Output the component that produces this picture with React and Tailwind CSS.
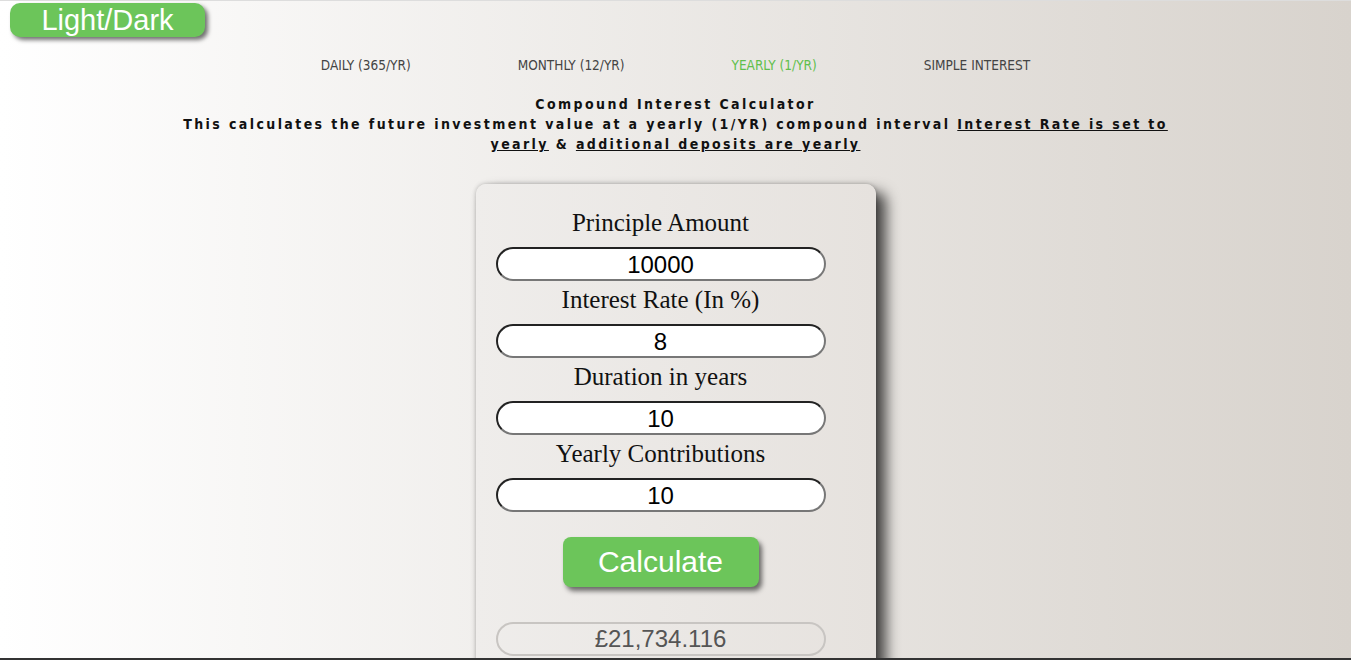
import React, { useState } from 'react';

const navItems = [
  { label: 'DAILY (365/YR)', active: false },
  { label: 'MONTHLY (12/YR)', active: false },
  { label: 'YEARLY (1/YR)', active: true },
  { label: 'SIMPLE INTEREST', active: false },
];

const Field = ({ label, value, onChange }) => (
  <div className="flex flex-col items-center">
    <label className="text-[25px] leading-[28px] text-[#111] mb-[10px]" style={{ fontFamily: '"Liberation Serif", serif' }}>
      {label}
    </label>
    <input
      value={value}
      onChange={(e) => onChange(e.target.value)}
      className="w-[330px] h-[34px] pt-[2px] rounded-full bg-white text-center text-[24px] text-black outline-none border-2 border-t-[#222] border-l-[#222] border-b-[#777] border-r-[#777] mb-[5px]"
      style={{ fontFamily: '"Liberation Sans", Arial, sans-serif' }}
    />
  </div>
);

export default function App() {
  const [principal, setPrincipal] = useState('10000');
  const [rate, setRate] = useState('8');
  const [years, setYears] = useState('10');
  const [contrib, setContrib] = useState('10');
  const [result, setResult] = useState('£21,734.116');

  const calculate = () => {
    const p = parseFloat(principal) || 0;
    const r = (parseFloat(rate) || 0) / 100;
    const n = parseFloat(years) || 0;
    const c = parseFloat(contrib) || 0;
    const growth = Math.pow(1 + r, n);
    const total = p * growth + (r ? c * ((growth - 1) / r) : c * n);
    setResult('£' + total.toLocaleString('en-GB', { maximumFractionDigits: 3 }));
  };

  return (
    <div className="w-full h-[660px] overflow-hidden bg-gradient-to-r from-white to-[#d8d3cd] border-t border-t-[#ddd] border-b-2 border-b-[#333]">
      <div className="px-[10px] pt-[2px]">
        <button
          className="w-[195px] h-[34px] rounded-[10px] bg-[#6cc55a] text-white text-[29px] leading-[34px] shadow-[3px_3px_4px_rgba(0,0,0,0.55)]"
          style={{ fontFamily: '"Liberation Sans", Arial, sans-serif' }}
        >
          Light/Dark
        </button>
      </div>

      <nav className="flex justify-center gap-[107px] mt-[19px] text-[13.5px] leading-[18px]" style={{ fontFamily: '"DejaVu Sans Condensed", "DejaVu Sans", sans-serif', fontStretch: 'condensed' }}>
        {navItems.map((item) => (
          <a key={item.label} className={item.active ? 'text-[#5fbf4c]' : 'text-[#444]'}>
            {item.label}
          </a>
        ))}
      </nav>

      <div className="mt-[20px] text-center text-[14px] leading-[20px] font-bold text-[#111] tracking-[2.4px] px-[170px]" style={{ fontFamily: '"DejaVu Sans Condensed", "DejaVu Sans", sans-serif', fontStretch: 'condensed' }}>
        <p>Compound Interest Calculator</p>
        <p>
          This calculates the future investment value at a yearly (1/YR) compound interval{' '}
          <span className="underline">Interest Rate is set to yearly</span> &amp;{' '}
          <span className="underline">additional deposits are yearly</span>
        </p>
      </div>

      <div className="flex justify-center mt-[30px]">
        <div className="w-[400px] rounded-[10px] bg-gradient-to-r from-[#efedeb] to-[#e6e2de] pt-[25px] pb-[40px] pl-[20px] pr-[50px] flex flex-col items-center shadow-[0_0_4px_rgba(0,0,0,0.25),10px_8px_14px_rgba(0,0,0,0.7)]">
          <Field label="Principle Amount" value={principal} onChange={setPrincipal} />
          <Field label="Interest Rate (In %)" value={rate} onChange={setRate} />
          <Field label="Duration in years" value={years} onChange={setYears} />
          <Field label="Yearly Contributions" value={contrib} onChange={setContrib} />

          <button
            onClick={calculate}
            className="mt-[20px] w-[196px] h-[50px] rounded-[8px] bg-[#6cc55a] text-white text-[30px] leading-[50px] shadow-[3px_4px_5px_rgba(0,0,0,0.55)]"
            style={{ fontFamily: '"Liberation Sans", Arial, sans-serif' }}
          >
            Calculate
          </button>

          <div
            className="mt-[35px] w-[330px] h-[34px] rounded-full border-2 border-[#c8c5c2] text-center text-[24px] leading-[30px] text-[#555]"
            style={{ fontFamily: '"Liberation Sans", Arial, sans-serif' }}
          >
            {result}
          </div>
        </div>
      </div>
    </div>
  );
}
